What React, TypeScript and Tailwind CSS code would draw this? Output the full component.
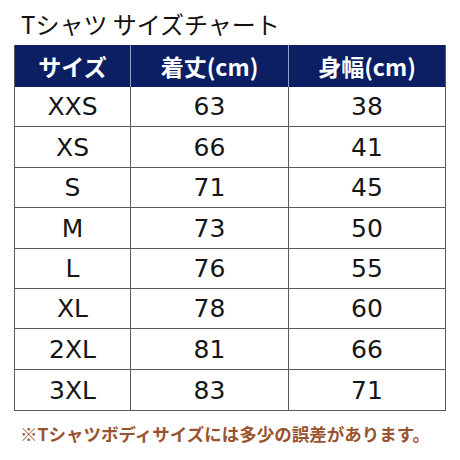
import React from "react";

const rows = [
  ["XXS", "63", "38"],
  ["XS", "66", "41"],
  ["S", "71", "45"],
  ["M", "73", "50"],
  ["L", "76", "55"],
  ["XL", "78", "60"],
  ["2XL", "81", "66"],
  ["3XL", "83", "71"],
];

export default function App() {
  return (
    <div
      className="w-[460px] h-[460px] bg-white flex flex-col"
      style={{ fontFamily: '"Noto Sans CJK JP", "Noto Sans", sans-serif' }}
    >
      <div className="pl-[21px] pt-[9px] h-[45px] text-[24px] leading-[30px] text-[#111]">
        Tシャツ サイズチャート
      </div>
      <div className="ml-[14px] w-[432px] border-[1.5px] border-[#5a5a5a] border-t-0">
        <div className="grid grid-cols-[116px_158px_1fr] h-[42px] bg-[#0b1f62] text-white text-[23px] font-bold">
          <div className="flex items-center justify-center border-r border-[#8ea0c8]">サイズ</div>
          <div className="flex items-center justify-center border-r border-[#8ea0c8]">着丈(cm)</div>
          <div className="flex items-center justify-center">身幅(cm)</div>
        </div>
        {rows.map((r, i) => (
          <div
            key={r[0]}
            className={`grid grid-cols-[116px_158px_1fr] h-[40.4px] text-[25px] text-[#151515] font-['DejaVu_Sans',sans-serif] ${i < rows.length - 1 ? "border-b-[1.5px] border-[#5a5a5a]" : ""}`}
          >
            <div className="flex items-center justify-center border-r-[1.5px] border-[#5a5a5a] pt-[1px]">{r[0]}</div>
            <div className="flex items-center justify-center border-r-[1.5px] border-[#5a5a5a] pt-[1px]">{r[1]}</div>
            <div className="flex items-center justify-center pt-[1px]">{r[2]}</div>
          </div>
        ))}
      </div>
      <div className="pl-[20px] pt-[12px] text-[17.5px] leading-[22px] font-bold text-[#9a532e]">
        ※Tシャツボディサイズには多少の誤差があります。
      </div>
    </div>
  );
}
